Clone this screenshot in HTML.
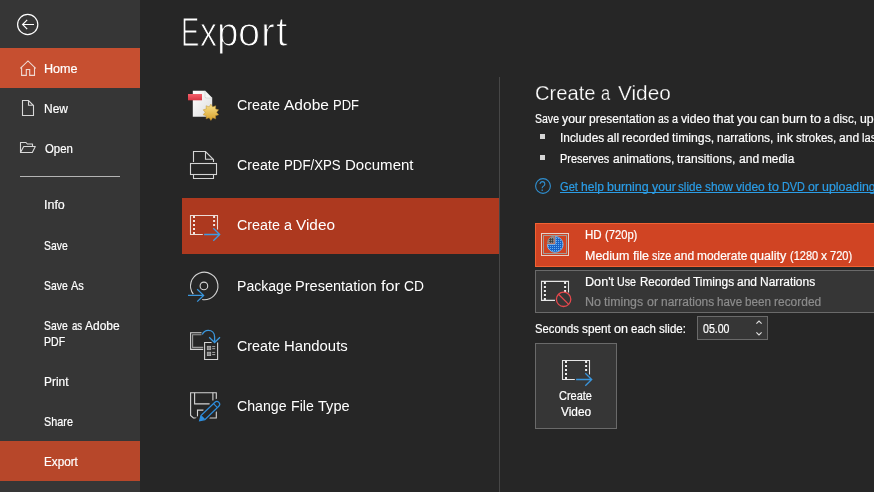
<!DOCTYPE html>
<html><head><meta charset="utf-8"><title>Export</title>
<style>
html,body{margin:0;padding:0;}
body{width:874px;height:492px;overflow:hidden;background:#262626;font-family:"Liberation Sans",sans-serif;color:#fff;position:relative;}
.abs{position:absolute;}
.t{position:absolute;white-space:nowrap;line-height:1;transform-origin:0 0;}
.s{-webkit-text-stroke:0.2px currentColor;}
.w span{position:absolute;top:0;transform-origin:0 0;}
svg{position:absolute;overflow:visible;}
</style></head><body>
<div class="abs" style="left:0;top:0;width:140px;height:492px;background:#363636"></div>
<div class="abs" style="left:0;top:48px;width:140px;height:40px;background:#c64f30"></div>
<div class="abs" style="left:0;top:441px;width:140px;height:40px;background:#b7472a"></div>
<div class="abs" style="left:20px;top:176px;width:100px;height:1px;background:#b4b4b4"></div>


<div class="abs" style="left:182px;top:198px;width:317px;height:56px;background:#ad391f"></div>
<div class="abs" style="left:499px;top:77px;width:1px;height:415px;background:#464646"></div>

<div class="abs" style="left:540px;top:134px;width:5px;height:5px;background:#d6d6d6"></div>
<div class="abs" style="left:540px;top:155px;width:5px;height:5px;background:#d6d6d6"></div>

<div class="abs" style="left:535px;top:223px;width:345px;height:44px;background:#d04423;border:1px solid #f26233;box-sizing:border-box"></div>
<div class="abs" style="left:535px;top:270px;width:345px;height:43px;background:#363636;border:1px solid #6a6a6a;box-sizing:border-box"></div>
<div class="abs" style="left:697px;top:316px;width:71px;height:24px;background:#363636;border:1px solid #6a6a6a;box-sizing:border-box"></div>
<div class="abs" style="left:535px;top:343px;width:82px;height:86px;background:#363636;border:1px solid #6a6a6a;box-sizing:border-box"></div>


<svg style="left:0;top:0" width="874" height="492" viewBox="0 0 874 492">
<defs>
<linearGradient id="pg" x1="0" y1="0" x2="1" y2="1"><stop offset="0" stop-color="#ffffff"/><stop offset="1" stop-color="#dcdcdc"/></linearGradient>
<linearGradient id="rg" x1="0" y1="0" x2="0" y2="1"><stop offset="0" stop-color="#f4606b"/><stop offset="1" stop-color="#d93643"/></linearGradient>
<linearGradient id="sg" x1="0" y1="0" x2="0" y2="1"><stop offset="0" stop-color="#f8e08a"/><stop offset="1" stop-color="#d9a22c"/></linearGradient>
<pattern id="dots" x="0" y="0" width="2" height="2" patternUnits="userSpaceOnUse"><rect x="0" y="0" width="1" height="1" fill="#69aeec"/></pattern>
</defs>
<!-- back -->
<g fill="none" stroke="#fff" stroke-width="1.2"><circle cx="27.700" cy="24.500" r="10.100"/><path d="M34 24.500H23M27.200 19.900L22.600 24.500L27.200 29.100"/></g>
<!-- home -->
<path d="M20.300 68.400L28 60.900L35.700 68.400M21.600 67.400V75.400H26.300V69.500H29.700V75.400H34.500V67.400" fill="none" stroke="#efd9d2" stroke-width="1.1"/>
<!-- new -->
<path d="M22.500 100.500H28.500L33.500 105.500V115.500H22.500ZM28.500 100.500V105.300H33.500" fill="none" stroke="#d8d8d8" stroke-width="1.1"/>
<!-- open -->
<path d="M20.500 152.500V142.500H26L27.300 144H32.500V146.500M20.500 152.500L23.700 146.500H35.300L32.300 152.500Z" fill="none" stroke="#d8d8d8" stroke-width="1.1" stroke-linejoin="round"/>
<!-- help -->
<circle cx="543" cy="186" r="7.4" fill="none" stroke="#2f8fd0" stroke-width="1.1"/>
<!-- adobe pdf -->
<path d="M192.800 90.800H205L212.200 98V116.700H192.800Z" fill="url(#pg)"/>
<path d="M205 90.800V98H212.200Z" fill="#c8c8c8"/>
<path d="M205 90.800L212.200 98H206.200Q205 98 205 96.800Z" fill="#f4f4f4" stroke="#bdbdbd" stroke-width="0.4"/>
<rect x="188" y="94" width="14" height="6.300" fill="url(#rg)"/>
<polygon points="210.90,104.20 212.66,106.88 215.66,105.75 215.51,108.95 218.60,109.80 216.60,112.30 218.60,114.80 215.51,115.65 215.66,118.85 212.66,117.72 210.90,120.40 209.14,117.72 206.14,118.85 206.29,115.65 203.20,114.80 205.20,112.30 203.20,109.80 206.29,108.95 206.14,105.75 209.14,106.88" fill="url(#sg)" stroke="#c0902a" stroke-width="0.5" stroke-linejoin="round"/>
<!-- printer -->
<g fill="none" stroke="#d4d4d4" stroke-width="1.1">
<path d="M193.500 162V151.500H205.500L213.500 159.500V162M205.500 151.500V159.200H213.500"/>
<rect x="190.500" y="163.500" width="26" height="11"/>
<path d="M193.500 174.500V178.500H213.500V174.500"/>
</g>
<!-- create video -->
<g transform="translate(190.5,215.5)" fill="none" stroke-width="1.1"><path d="M12.3 19H0V0H27V14" stroke="#ecdcd6"/><rect x="2.5" y="0.5" width="2" height="2" fill="#f3e6e2" stroke="none"/><rect x="2.5" y="4.5" width="2" height="2" fill="#f3e6e2" stroke="none"/><rect x="2.5" y="8.5" width="2" height="2" fill="#f3e6e2" stroke="none"/><rect x="2.5" y="12.5" width="2" height="2" fill="#f3e6e2" stroke="none"/><rect x="2.5" y="16.5" width="2" height="2" fill="#f3e6e2" stroke="none"/><rect x="22.6" y="0.5" width="2" height="2" fill="#f3e6e2" stroke="none"/><rect x="22.6" y="4.5" width="2" height="2" fill="#f3e6e2" stroke="none"/><rect x="22.6" y="8.5" width="2" height="2" fill="#f3e6e2" stroke="none"/><path d="M13.6 19H29.2M22.8 12.8L29.2 19L22.8 25.2" stroke="#3f9be2" stroke-width="1.3"/></g>
<!-- cd -->
<g fill="none" stroke="#d4d4d4" stroke-width="1.1">
<path d="M193.300 294.200A13.700 13.700 0 1 1 202.200 299.500"/>
<circle cx="203.900" cy="285.900" r="3.800"/>
</g>
<path d="M188 295.400H203.600M197.200 289.200L203.600 295.400L197.200 301.600" fill="none" stroke="#3a96dd" stroke-width="1.3"/>
<!-- handouts -->
<g fill="none" stroke-width="1.1">
<path d="M201.500 332.700H190.600V349.400H203.200" stroke="#d4d4d4"/>
<path d="M201.500 334.800H192.600V347.400H203.200" stroke="#9a9a9a"/>
<path d="M211.600 342.500H204.600V359.500H217.600V342.500" stroke="#d4d4d4"/>
<rect x="207.300" y="346.300" width="3.400" height="3.400" fill="#8a8a8a" stroke="#b4b4b4" stroke-width="0.8"/>
<rect x="207.300" y="352.200" width="3.400" height="3.400" fill="#8a8a8a" stroke="#b4b4b4" stroke-width="0.8"/>
<path d="M212.200 346.600H215.200M212.200 348.700H215.200M212.200 352.400H215.200M212.200 354.600H215.200" stroke="#b8b8b8" stroke-width="0.9"/>
<path d="M202.300 334.600C203.500 331.500 206 330.400 208.300 330.400C212 330.400 214.600 333 214.600 337V342.300M209.200 337.200L214.600 342.500L220 337.200" stroke="#3a96dd" stroke-width="1.3"/>
</g>
<!-- change file type -->
<g fill="none" stroke="#d4d4d4" stroke-width="1.1">
<path d="M216.300 399.600V392.700H190.600V415.400L193.400 418H197.500V410.100H203.500M209.400 418H216.300V411.400"/>
<path d="M194.600 392.700V403.900H209.600M212.900 392.700V400.500"/>
</g>
<g transform="translate(199.600,420.800) rotate(-43.800)">
<path d="M-1.500 -4.600H26Q29 -4.600 29 0Q29 4.600 26 4.600H-1.500Z" fill="#262626" stroke="none"/>
<path d="M0 0L4.600 -2.800H23.900Q26.700 -2.800 26.700 0Q26.700 2.800 23.900 2.800H4.600Z" fill="#262626" stroke="#2e8ede" stroke-width="1.2"/>
<path d="M0 0L5.200 -2.800V2.800Z" fill="#2e8ede"/>
<path d="M22 -2.800V2.800" stroke="#2e8ede" stroke-width="1.1"/>
</g>
<!-- HD icon -->
<rect x="541.500" y="233.500" width="27" height="22" fill="none" stroke="#e2d2cb" stroke-width="1"/>
<rect x="543.500" y="235.500" width="23" height="18" fill="none" stroke="#a39a96" stroke-width="1"/>
<path d="M555.200 244.400V236.500A7.900 7.900 0 1 1 547.300 244.400Z" fill="#1862c6"/>
<path d="M555.200 244.400V236.500A7.900 7.900 0 1 1 547.300 244.400Z" fill="url(#dots)" stroke="#7fc0f2" stroke-width="0.9"/>
<path d="M554.400 243.400V235.800A7.600 7.600 0 0 0 546.800 243.400Z" fill="#8c8c8c"/>
<path d="M549 239.500H553.500M549 241.500H553.500M550.500 238V243M552.500 238V243" stroke="#3c3c3c" stroke-width="0.800"/>
<!-- no timings icon -->
<g transform="translate(541.5,281.4)" fill="none" stroke-width="1.1"><path d="M13.5 19H0V0H27V11" stroke="#e6e6e6"/><rect x="2.4" y="0.6000000000000001" width="2" height="2" fill="#f0f0f0" stroke="none"/><rect x="2.4" y="4.6" width="2" height="2" fill="#f0f0f0" stroke="none"/><rect x="2.4" y="8.6" width="2" height="2" fill="#f0f0f0" stroke="none"/><rect x="2.4" y="12.6" width="2" height="2" fill="#f0f0f0" stroke="none"/><rect x="2.4" y="16.6" width="2" height="2" fill="#f0f0f0" stroke="none"/><rect x="22.6" y="0.6000000000000001" width="2" height="2" fill="#f0f0f0" stroke="none"/><rect x="22.6" y="4.6" width="2" height="2" fill="#f0f0f0" stroke="none"/><rect x="22.6" y="8.6" width="2" height="2" fill="#f0f0f0" stroke="none"/><circle cx="22.1" cy="17.9" r="7.2" stroke="#e5484d" stroke-width="1.3"/><path d="M17 12.8L27.2 23" stroke="#e5484d" stroke-width="1.3"/></g>
<!-- spinner arrows -->
<path d="M756.400 323.600L759 321L761.600 323.600M756.400 332.400L759 335L761.600 332.400" fill="none" stroke="#e0e0e0" stroke-width="1.1"/>
<!-- button icon -->
<g transform="translate(562.5,360.5)" fill="none" stroke-width="1.1"><path d="M12.3 19H0V0H27V14" stroke="#e6e6e6"/><rect x="2.5" y="0.5" width="2" height="2" fill="#f0f0f0" stroke="none"/><rect x="2.5" y="4.5" width="2" height="2" fill="#f0f0f0" stroke="none"/><rect x="2.5" y="8.5" width="2" height="2" fill="#f0f0f0" stroke="none"/><rect x="2.5" y="12.5" width="2" height="2" fill="#f0f0f0" stroke="none"/><rect x="2.5" y="16.5" width="2" height="2" fill="#f0f0f0" stroke="none"/><rect x="22.6" y="0.5" width="2" height="2" fill="#f0f0f0" stroke="none"/><rect x="22.6" y="4.5" width="2" height="2" fill="#f0f0f0" stroke="none"/><rect x="22.6" y="8.5" width="2" height="2" fill="#f0f0f0" stroke="none"/><path d="M13.6 19H29.2M22.8 12.8L29.2 19L22.8 25.2" stroke="#3a96dd" stroke-width="1.3"/></g>
</svg>

<div id="txt" style="position:absolute;left:0;top:0;width:874px;height:492px;will-change:transform">
<div class="t s" style="left:43.60px;top:63px;font-size:12.8px;transform:scaleX(0.985);color:#fff;">Home</div>
<div class="t s" style="left:43.50px;top:103px;font-size:12.4px;transform:scaleX(0.966);color:#fff;">New</div>
<div class="t s" style="left:44.50px;top:143px;font-size:12.4px;transform:scaleX(0.920);color:#fff;">Open</div>
<div class="t s" style="left:43.80px;top:199px;font-size:12.4px;transform:scaleX(1.006);color:#fff;">Info</div>
<div class="t s" style="left:44.20px;top:240px;font-size:12.4px;transform:scaleX(0.839);color:#fff;">Save</div>
<div class="t w s" style="left:0;top:280px;font-size:12.4px;color:#fff;"><span style="left:44.20px;transform:scaleX(0.839)">Save</span> <span style="left:70.86px;transform:scaleX(0.888)">As</span></div>
<div class="t w s" style="left:0;top:320px;font-size:12.4px;color:#fff;"><span style="left:44.20px;transform:scaleX(0.839)">Save</span> <span style="left:71.70px;transform:scaleX(0.776)">as</span> <span style="left:85.10px;transform:scaleX(0.966)">Adobe</span></div>
<div class="t s" style="left:43.80px;top:336px;font-size:12.4px;transform:scaleX(0.850);color:#fff;">PDF</div>
<div class="t s" style="left:43.80px;top:376px;font-size:12.4px;transform:scaleX(0.959);color:#fff;">Print</div>
<div class="t s" style="left:44.40px;top:416px;font-size:12.4px;transform:scaleX(0.874);color:#fff;">Share</div>
<div class="t s" style="left:43.80px;top:456px;font-size:12.4px;transform:scaleX(0.945);color:#fff;">Export</div>
<div class="t w" style="left:0;top:12px;font-size:41px;color:#fff;-webkit-text-stroke:1.1px #262626;"><span style="left:180.60px;transform:scaleX(0.669)">E</span><span style="left:199.60px;transform:scaleX(0.828)">x</span><span style="left:216.73px;transform:scaleX(0.940)">p</span><span style="left:238.44px;transform:scaleX(0.966)">o</span><span style="left:261.49px;transform:scaleX(1.008)">r</span><span style="left:275.90px;transform:scaleX(1.008)">t</span></div>
<div class="t w" style="left:0;top:97px;font-size:15.4px;color:#fff;"><span style="left:237.40px;transform:scaleX(0.929)">Create</span> <span style="left:284.32px;transform:scaleX(1.010)">Adobe</span> <span style="left:333.24px;transform:scaleX(0.843)">PDF</span></div>
<div class="t w" style="left:0;top:157px;font-size:15.4px;color:#fff;"><span style="left:237.40px;transform:scaleX(0.925)">Create</span> <span style="left:284.10px;transform:scaleX(0.860)">PDF/XPS</span> <span style="left:344.71px;transform:scaleX(0.977)">Document</span></div>
<div class="t w" style="left:0;top:217px;font-size:15.4px;color:#fff;"><span style="left:237.40px;transform:scaleX(0.930)">Create</span> <span style="left:284.38px;transform:scaleX(0.934)">a</span> <span style="left:296.38px;transform:scaleX(0.997)">Video</span></div>
<div class="t w" style="left:0;top:278px;font-size:15.4px;color:#fff;"><span style="left:236.60px;transform:scaleX(0.914)">Package</span> <span style="left:295.35px;transform:scaleX(0.945)">Presentation</span> <span style="left:380.99px;transform:scaleX(1.053)">for</span> <span style="left:403.90px;transform:scaleX(0.896)">CD</span></div>
<div class="t w" style="left:0;top:338px;font-size:15.4px;color:#fff;"><span style="left:237.40px;transform:scaleX(0.927)">Create</span> <span style="left:284.19px;transform:scaleX(0.967)">Handouts</span></div>
<div class="t w" style="left:0;top:398px;font-size:15.4px;color:#fff;"><span style="left:237.40px;transform:scaleX(0.918)">Change</span> <span style="left:290.86px;transform:scaleX(0.918)">File</span> <span style="left:317.58px;transform:scaleX(0.949)">Type</span></div>
<div class="t w" style="left:0;top:84px;font-size:19.6px;color:#fff;-webkit-text-stroke:0.25px #262626;"><span style="left:534.56px;transform:scaleX(1.028)">Create</span> <span style="left:601.09px;transform:scaleX(0.839)">a</span> <span style="left:617.79px;transform:scaleX(1.061)">Video</span></div>
<div class="t w s" style="left:0;top:113px;font-size:12.0px;color:#fff;"><span style="left:535.20px;transform:scaleX(0.877)">Save</span> <span style="left:562.19px;transform:scaleX(1.028)">your</span> <span style="left:589.19px;transform:scaleX(0.999)">presentation</span> <span style="left:658.17px;transform:scaleX(0.868)">as</span> <span style="left:672.17px;transform:scaleX(0.899)">a</span> <span style="left:681.17px;transform:scaleX(1.011)">video</span> <span style="left:713.16px;transform:scaleX(1.049)">that</span> <span style="left:737.16px;transform:scaleX(1.034)">you</span> <span style="left:760.15px;transform:scaleX(0.982)">can</span> <span style="left:782.15px;transform:scaleX(1.041)">burn</span> <span style="left:810.14px;transform:scaleX(1.099)">to</span> <span style="left:824.14px;transform:scaleX(0.899)">a</span> <span style="left:833.14px;transform:scaleX(0.972)">disc,</span> <span style="left:860.13px;transform:scaleX(1.027)">upload</span> <span style="left:900.13px;transform:scaleX(1.099)">to</span> <span style="left:914.12px;transform:scaleX(1.019)">the</span> <span style="left:934.12px;transform:scaleX(0.986)">web,</span> <span style="left:962.11px;transform:scaleX(1.031)">or</span> <span style="left:976.11px;transform:scaleX(0.976)">email</span></div>
<div class="t w s" style="left:0;top:132px;font-size:12.0px;color:#fff;"><span style="left:559.60px;transform:scaleX(0.989)">Includes</span> <span style="left:606.83px;transform:scaleX(1.004)">all</span> <span style="left:621.91px;transform:scaleX(0.997)">recorded</span> <span style="left:672.15px;transform:scaleX(1.021)">timings,</span> <span style="left:717.38px;transform:scaleX(0.993)">narrations,</span> <span style="left:776.67px;transform:scaleX(1.048)">ink</span> <span style="left:795.76px;transform:scaleX(0.957)">strokes,</span> <span style="left:838.97px;transform:scaleX(1.004)">and</span> <span style="left:862.09px;transform:scaleX(0.927)">laser</span> <span style="left:889.22px;transform:scaleX(1.041)">pointer</span> <span style="left:930.42px;transform:scaleX(0.961)">gestures</span></div>
<div class="t w s" style="left:0;top:153px;font-size:12.0px;color:#fff;"><span style="left:560.30px;transform:scaleX(0.913)">Preserves</span> <span style="left:612.65px;transform:scaleX(1.001)">animations,</span> <span style="left:677.09px;transform:scaleX(1.006)">transitions,</span> <span style="left:738.50px;transform:scaleX(1.006)">and</span> <span style="left:761.66px;transform:scaleX(0.986)">media</span></div>
<div class="t w s" style="left:0;top:181px;font-size:12.0px;color:#2b9de6;"><span style="left:560.10px;transform:scaleX(0.925)">Get</span> <span style="left:580.98px;transform:scaleX(1.008)">help</span> <span style="left:606.83px;transform:scaleX(1.043)">burning</span> <span style="left:651.57px;transform:scaleX(1.022)">your</span> <span style="left:678.41px;transform:scaleX(0.967)">slide</span> <span style="left:705.26px;transform:scaleX(0.994)">show</span> <span style="left:736.08px;transform:scaleX(1.005)">video</span> <span style="left:767.89px;transform:scaleX(1.093)">to</span> <span style="left:781.81px;transform:scaleX(0.903)">DVD</span> <span style="left:807.66px;transform:scaleX(1.025)">or</span> <span style="left:821.58px;transform:scaleX(1.031)">uploading</span> <span style="left:878.25px;transform:scaleX(1.160)">it</span> <span style="left:888.19px;transform:scaleX(1.093)">to</span> <span style="left:902.11px;transform:scaleX(1.013)">the</span> <span style="left:921.99px;transform:scaleX(0.994)">web</span></div>
<div class="abs" style="left:560.1px;top:192px;width:383.8px;height:1px;background:#2b9de6"></div>
<div class="t" style="left:539.40px;top:179px;font-size:14px;transform:scaleX(0.872);color:#2f8fd0;">?</div>
<div class="t w s" style="left:0;top:229px;font-size:12.0px;color:#fff;"><span style="left:585.40px;transform:scaleX(0.960)">HD</span> <span style="left:604.98px;transform:scaleX(0.932)">(720p)</span></div>
<div class="t w s" style="left:0;top:250px;font-size:12.0px;color:#fff;"><span style="left:585.40px;transform:scaleX(1.038)">Medium</span> <span style="left:632.70px;transform:scaleX(1.050)">file</span> <span style="left:651.82px;transform:scaleX(0.896)">size</span> <span style="left:673.96px;transform:scaleX(1.005)">and</span> <span style="left:697.11px;transform:scaleX(0.993)">moderate</span> <span style="left:750.45px;transform:scaleX(1.044)">quality</span> <span style="left:789.70px;transform:scaleX(0.918)">(1280</span> <span style="left:820.90px;transform:scaleX(1.006)">x</span> <span style="left:829.96px;transform:scaleX(0.922)">720)</span></div>
<div class="t w s" style="left:0;top:276px;font-size:12.0px;color:#fff;"><span style="left:585.40px;transform:scaleX(1.052)">Don't</span> <span style="left:617.47px;transform:scaleX(0.892)">Use</span> <span style="left:639.52px;transform:scaleX(0.963)">Recorded</span> <span style="left:692.63px;transform:scaleX(0.989)">Timings</span> <span style="left:736.73px;transform:scaleX(1.001)">and</span> <span style="left:759.78px;transform:scaleX(0.996)">Narrations</span></div>
<div class="t w s" style="left:0;top:296px;font-size:12.0px;color:#8c8c8c;"><span style="left:585.40px;transform:scaleX(1.046)">No</span> <span style="left:604.46px;transform:scaleX(1.029)">timings</span> <span style="left:646.60px;transform:scaleX(1.034)">or</span> <span style="left:660.65px;transform:scaleX(0.996)">narrations</span> <span style="left:716.83px;transform:scaleX(0.964)">have</span> <span style="left:744.92px;transform:scaleX(0.977)">been</span> <span style="left:774.02px;transform:scaleX(0.996)">recorded</span></div>
<div class="t w s" style="left:0;top:323px;font-size:12.0px;color:#fff;"><span style="left:535.30px;transform:scaleX(0.938)">Seconds</span> <span style="left:582.09px;transform:scaleX(0.984)">spent</span> <span style="left:613.95px;transform:scaleX(1.044)">on</span> <span style="left:630.88px;transform:scaleX(0.957)">each</span> <span style="left:658.75px;transform:scaleX(0.960)">slide:</span></div>
<div class="t s" style="left:703.20px;top:323px;font-size:12.0px;transform:scaleX(0.882);color:#fff;">05.00</div>
<div class="t s" style="left:558.80px;top:390px;font-size:12.0px;transform:scaleX(0.915);color:#fff;">Create</div>
<div class="t s" style="left:560.50px;top:406px;font-size:12.0px;transform:scaleX(0.990);color:#fff;">Video</div>
</div>
</body></html>
